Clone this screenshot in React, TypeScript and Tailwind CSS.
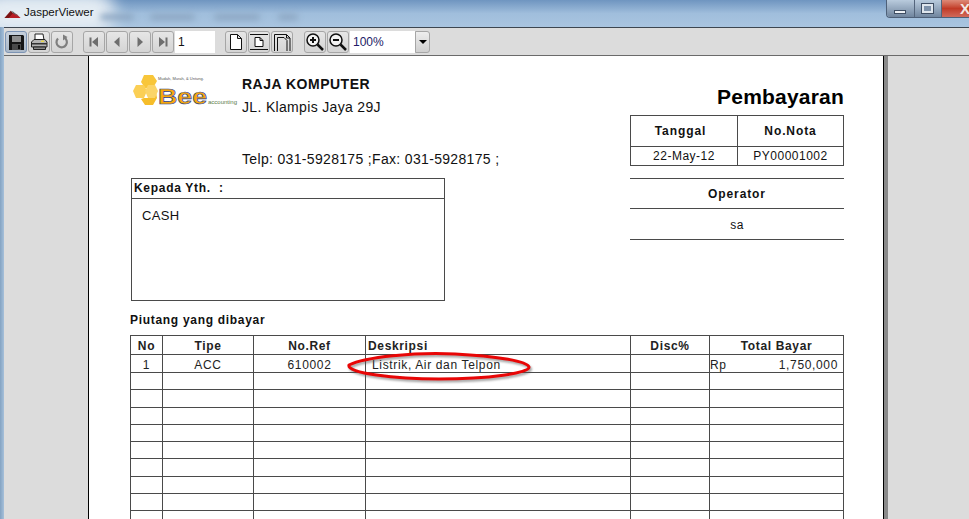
import type { ReactNode } from 'react';

const font = "font-['Liberation_Sans',Arial,sans-serif]";

function ToolButton({ children, active }: { children: ReactNode; active?: boolean }) {
  return (
    <div
      className={`w-[22px] h-[22px] shrink-0 rounded-[3px] border flex items-center justify-center ${
        active
          ? 'border-[#7d94b4] bg-gradient-to-b from-[#c6d0dc] to-[#aab8c8]'
          : 'border-[#a6a6a6] bg-gradient-to-b from-[#e6e6e6] to-[#d4d4d4]'
      }`}
    >
      {children}
    </div>
  );
}

function SaveIcon() {
  return (
    <svg width="17" height="17" viewBox="0 0 17 17">
      <path d="M1 1h14l1 1v14H1z" fill="#161616" />
      <rect x="4" y="2" width="9" height="6" fill="#8e8e8e" />
      <rect x="4" y="10" width="9" height="6" fill="#4a4a4a" />
      <rect x="10" y="11" width="2" height="4" fill="#0a0a0a" />
    </svg>
  );
}

function PrintIcon() {
  return (
    <svg width="18" height="18" viewBox="0 0 18 18">
      <path d="M5 1h8l1 6H5z" fill="#fff" stroke="#222" />
      <path d="M1.500 9 4 6.500h11L17 9v5H1.500z" fill="#b4b4b4" stroke="#222" />
      <rect x="2" y="10" width="15" height="1.500" fill="#333" />
      <rect x="11" y="7.500" width="3" height="1.500" fill="#e8d84a" />
      <path d="M3.500 14h12v2.500h-12z" fill="#888" stroke="#222" />
    </svg>
  );
}

function RefreshIcon() {
  return (
    <svg width="16" height="16" viewBox="0 0 16 16" fill="none">
      <path d="M10 3.500A5.200 5.200 0 1 1 4 4.500" stroke="#7f7f7f" strokeWidth="2.200" />
      <path d="M9 0.500 13.500 3 9 6.500z" fill="#7f7f7f" />
    </svg>
  );
}

function NavIcon({ kind }: { kind: 'first' | 'prev' | 'next' | 'last' }) {
  return (
    <svg width="12" height="12" viewBox="0 0 12 12" fill="#6e6e6e">
      {kind === 'first' && (
        <>
          <rect x="1.500" y="1.500" width="2" height="9" />
          <path d="M10 1v10L4 6z" />
        </>
      )}
      {kind === 'prev' && <path d="M8.500 1v10L3 6z" />}
      {kind === 'next' && <path d="M3.500 1v10L9 6z" />}
      {kind === 'last' && (
        <>
          <path d="M2 1v10l6-5z" />
          <rect x="8.500" y="1.500" width="2" height="9" />
        </>
      )}
    </svg>
  );
}

function PageIcon({ kind }: { kind: 'actual' | 'width' | 'height' }) {
  return (
    <svg width="18" height="18" viewBox="0 0 18 18" fill="none" stroke="#111">
      {kind === 'actual' && <path d="M3.500 1.500h7l4 4v11h-11zM10.500 1.500v4h4" fill="#fff" />}
      {kind === 'width' && (
        <>
          <path d="M0 1.500h18M0 16.500h18" />
          <path d="M5 4.500h5l3 3v6H5zM10 4.500v3h3" fill="#fff" />
        </>
      )}
      {kind === 'height' && (
        <>
          <path d="M1.500 18V1.500h12l3.500 3.500v13M13.500 1.500V5H17" />
          <path d="M4.500 18V4.500h6.500l3 3V18" />
        </>
      )}
    </svg>
  );
}

function ZoomIcon({ plus }: { plus?: boolean }) {
  return (
    <svg width="20" height="20" viewBox="0 0 20 20" fill="none" stroke="#111">
      <circle cx="8" cy="8" r="6" fill="#f4f4f4" strokeWidth="1.500" />
      <path d="M5 8h6" strokeWidth="2" />
      {plus && <path d="M8 5v6" strokeWidth="2" />}
      <path d="m12.500 12.500 5.500 5.500" strokeWidth="2.500" />
    </svg>
  );
}

function BeeLogo() {
  return (
    <svg width="108" height="36" viewBox="0 0 108 36" className="shrink-0">
      <path d="M11 0h9l4 6-4 7h-8l-4-6z" fill="#f8c63a" />
      <path d="M3 10h8l3 6-3 7H3l-3-7z" fill="#fbcf55" />
      <path d="M11 23h9l3-6 1 6-4 7h-8l-4-6z" fill="#f6bd2a" />
      <path d="M15 10h7l3 6-3 7h-7l-3-7z" fill="#fbd468" />
      <text x="25" y="5" fontSize="4" fill="#555" fontFamily="Liberation Sans">Mudah, Murah, & Untung.</text>
      <text x="25" y="29" fontSize="22" fontWeight="700" fill="#f7a70e" stroke="#1f3f8f" strokeWidth="0.600" fontFamily="Liberation Sans" textLength="49" lengthAdjust="spacingAndGlyphs">Bee</text>
      <text x="75" y="29" fontSize="6" fill="#5a7a48" fontFamily="Liberation Sans">accounting</text>
    </svg>
  );
}

const columns = [
  { width: 'w-[32px]', label: 'No', value: '1', align: 'text-center' },
  { width: 'w-[91px]', label: 'Tipe', value: 'ACC', align: 'text-center' },
  { width: 'w-[112px]', label: 'No.Ref', value: '610002', align: 'text-center' },
  { width: 'w-[265px]', label: 'Deskripsi', value: 'Listrik, Air dan Telpon', align: 'text-left pl-[6px]' },
  { width: 'w-[79px]', label: 'Disc%', value: '', align: 'text-center' },
  { width: 'w-[134px]', label: 'Total Bayar', value: '', align: 'text-center' },
];

const emptyRows = [0, 1, 2, 3, 4, 5, 6, 7, 8];

function ItemTable() {
  return (
    <table className="table-fixed border-collapse w-[713px] text-[12px] leading-none text-[#222] tracking-[0.65px]">
      <thead>
        <tr className="h-[19px]">
          {columns.map((c) => (
            <th
              key={c.label}
              className={`${c.width} border border-[#4a4a4a] p-0 pt-px font-bold ${
                c.label === 'Deskripsi' ? 'text-left pl-[2px]' : 'text-center'
              }`}
            >
              {c.label}
            </th>
          ))}
        </tr>
      </thead>
      <tbody>
        <tr className="h-[18px]">
          {columns.map((c) => (
            <td key={c.label} className={`border border-[#4a4a4a] p-0 pt-[2px] ${c.align}`}>
              {c.label === 'Total Bayar' ? (
                <div className="flex justify-between pr-[5px]">
                  <span>Rp</span>
                  <span>1,750,000</span>
                </div>
              ) : (
                c.value
              )}
            </td>
          ))}
        </tr>
        {emptyRows.map((r) => (
          <tr key={r} className="h-[17.300px]">
            {columns.map((c) => (
              <td key={c.label} className="border border-[#4a4a4a] p-0" />
            ))}
          </tr>
        ))}
      </tbody>
    </table>
  );
}

export default function App() {
  return (
    <div className={`${font} relative w-[969px] h-[519px] overflow-hidden flex flex-col bg-[#a3bfdc]`}>
      {/* title bar */}
      <div className="relative h-[27px] shrink-0 flex items-center pl-[4px] bg-gradient-to-b from-[#6f95c0] via-[#a0bedc] to-[#a9c5e0] overflow-hidden">
        <div className="absolute left-[-20px] top-[-8px] w-[135px] h-[42px] rounded-full bg-[#e4ecf3] blur-[8px]" />
        <div className="absolute left-[100px] top-[14px] w-[34px] h-[6px] rounded-full bg-[#8ba5c1] blur-[3px]" />
        <div className="absolute left-[150px] top-[14px] w-[45px] h-[6px] rounded-full bg-[#8ba5c1] blur-[3px]" />
        <div className="absolute left-[214px] top-[14px] w-[46px] h-[6px] rounded-full bg-[#8ba5c1] blur-[3px]" />
        <div className="absolute left-[278px] top-[14px] w-[20px] h-[6px] rounded-full bg-[#8ba5c1] blur-[3px]" />
        <svg width="17" height="9" viewBox="0 0 18 10" className="relative -mt-[1px]">
          <path d="M0 10 7 2l3 3-4 5z" fill="#7d1414" />
          <path d="M5 10l5-6 4 2 4 4z" fill="#b81c24" />
          <path d="M7 2l3 1 6 6-6-4z" fill="#666" />
        </svg>
        <span className="relative ml-[3px] -mt-[2px] text-[11.500px] text-[#111]">JasperViewer</span>
        <div className="absolute top-0 left-[886px] h-[18px] w-[84px] flex rounded-bl-[4px] border-l border-b border-[#4e6078] overflow-hidden">
          <div className="w-[28px] flex items-end justify-center pb-[3px] border-r border-[#54657c] bg-gradient-to-b from-[#b9cbdd] to-[#71869f]">
            <div className="w-[12px] h-[4px] bg-[#eef2f6] border border-[#3f4e63]" />
          </div>
          <div className="w-[27px] flex items-center justify-center border-r border-[#54657c] bg-gradient-to-b from-[#b9cbdd] to-[#71869f]">
            <div className="w-[11px] h-[9px] border-2 border-[#dfe6ed] bg-[#7e92aa] outline outline-[#3f4e63]" />
          </div>
          <div className="flex-1 flex items-center pl-[18px] bg-gradient-to-b from-[#dd8a78] via-[#c13a26] to-[#d0695a]">
            <span className="text-[15px] font-bold text-[#f2e8e4] leading-none">X</span>
          </div>
        </div>
      </div>

      <div className="flex-1 min-h-0 flex">
        <div className="w-[4px] shrink-0 bg-gradient-to-r from-[#84a3c2] to-[#a6c0da]" />
        <div className="flex-1 min-w-0 flex flex-col">
          {/* toolbar */}
          <div className="h-[29px] shrink-0 flex items-center pl-px pt-px bg-[#dcdcdc] border-t border-[#3d4650] border-b border-b-[#6a6a6a]">
            <ToolButton active>
              <SaveIcon />
            </ToolButton>
            <div className="w-px" />
            <ToolButton>
              <PrintIcon />
            </ToolButton>
            <div className="w-px" />
            <ToolButton>
              <RefreshIcon />
            </ToolButton>
            <div className="w-[10px]" />
            <div className="flex gap-px">
              <ToolButton>
                <NavIcon kind="first" />
              </ToolButton>
              <ToolButton>
                <NavIcon kind="prev" />
              </ToolButton>
              <ToolButton>
                <NavIcon kind="next" />
              </ToolButton>
              <ToolButton>
                <NavIcon kind="last" />
              </ToolButton>
            </div>
            <div className="w-[40px] h-[22px] shrink-0 ml-px bg-white flex items-center pl-[3px] text-[12px] text-[#111]">1</div>
            <div className="w-[10px]" />
            <div className="flex gap-px">
              <ToolButton>
                <PageIcon kind="actual" />
              </ToolButton>
              <ToolButton>
                <PageIcon kind="width" />
              </ToolButton>
              <ToolButton>
                <PageIcon kind="height" />
              </ToolButton>
            </div>
            <div className="w-[11px]" />
            <div className="flex gap-px">
              <ToolButton>
                <ZoomIcon plus />
              </ToolButton>
              <ToolButton>
                <ZoomIcon />
              </ToolButton>
            </div>
            <div className="w-[65px] h-[22px] shrink-0 ml-px bg-white flex items-center pl-[3px] text-[12px] text-[#221a66]">100%</div>
            <div className="w-[15px] h-[22px] shrink-0 rounded-r-[3px] border border-[#a6a6a6] bg-gradient-to-b from-[#eeeeee] to-[#cfcfcf] flex items-center justify-center">
              <div className="w-0 h-0 border-x-[4px] border-x-transparent border-t-[4px] border-t-black" />
            </div>
          </div>

          {/* report canvas */}
          <div className="flex-1 min-h-0 bg-[#dcdcdc] pl-[84px] overflow-hidden">
            <div className="w-[800px] h-full flex border-l border-black">
              <div className="w-[794px] h-[600px] shrink-0 bg-white pl-[41px] pr-[40px] text-[#111]">
                <div className="flex w-[713px] ml-px">
                  {/* left header */}
                  <div className="w-[499px] shrink-0">
                    <div className="flex h-[122px] pt-[19px] pl-[2px]">
                      <BeeLogo />
                      <div className="pl-px text-[14px] leading-[23px] tracking-[0.33px]">
                        <div className="font-bold -mt-[2px] tracking-[0.5px]">RAJA KOMPUTER</div>
                        <div>JL. Klampis Jaya 29J</div>
                        <div className="mt-[29px]">Telp: 031-5928175 ;Fax: 031-5928175 ;</div>
                      </div>
                    </div>
                    <div className="w-[314px] h-[123px] border border-[#4a4a4a]">
                      <div className="h-[20px] border-b border-[#4a4a4a] pl-[2px] text-[12px] font-bold tracking-[0.7px] leading-[19px]">Kepada Yth. &nbsp;:</div>
                      <div className="pl-[10px] pt-[10px] text-[13px] tracking-[0.3px] leading-[14px]">CASH</div>
                    </div>
                  </div>
                  {/* right header */}
                  <div className="w-[214px] shrink-0">
                    <div className="h-[59px] pt-[28px] text-right text-[21px] font-bold tracking-[0.2px] leading-[25px] text-black">Pembayaran</div>
                    <div className="grid grid-cols-[107px_105px] text-[12px] tracking-[0.5px] text-center border border-[#4a4a4a]">
                      <div className="h-[31px] border-r border-b border-[#4a4a4a] font-bold leading-[30px] tracking-[0.9px] pr-[7px]">Tanggal</div>
                      <div className="h-[31px] border-b border-[#4a4a4a] font-bold leading-[30px] tracking-[0.9px]">No.Nota</div>
                      <div className="h-[18px] border-r border-[#4a4a4a] leading-[19px]">22-May-12</div>
                      <div className="h-[18px] leading-[19px]">PY00001002</div>
                    </div>
                    <div className="mt-[12px] h-[62px] border-y border-[#4a4a4a] text-[12px] tracking-[0.5px] text-center">
                      <div className="h-[30px] border-b border-[#4a4a4a] font-bold leading-[31px] tracking-[0.9px]">Operator</div>
                      <div className="leading-[32px]">sa</div>
                    </div>
                  </div>
                </div>
                <div className="mt-[11px] h-[23px] text-[12px] font-bold tracking-[0.7px] leading-[16px]">Piutang yang dibayar</div>
                <ItemTable />
              </div>
              <div className="w-[1px] shrink-0 bg-black" />
              <div className="w-[4px] shrink-0 bg-[#8a8a8a]" />
            </div>
          </div>
        </div>
      </div>

      {/* annotation over the report */}
      <svg width="190" height="36" viewBox="0 0 190 36" className="absolute left-[345px] top-[349px]" fill="none">
        <path
          d="M4 16C20 8 70 3 110 5c40 2 72 7 74 13 1 6-40 12-90 12C50 30 1 24 4 16z"
          stroke="#555"
          strokeOpacity="0.55"
          strokeWidth="3"
          transform="translate(1.500 2)"
          className="blur-[1px]"
        />
        <path d="M4 16C20 8 70 3 110 5c40 2 72 7 74 13 1 6-40 12-90 12C50 30 1 24 4 16z" stroke="#e80606" strokeWidth="3" />
      </svg>
    </div>
  );
}
